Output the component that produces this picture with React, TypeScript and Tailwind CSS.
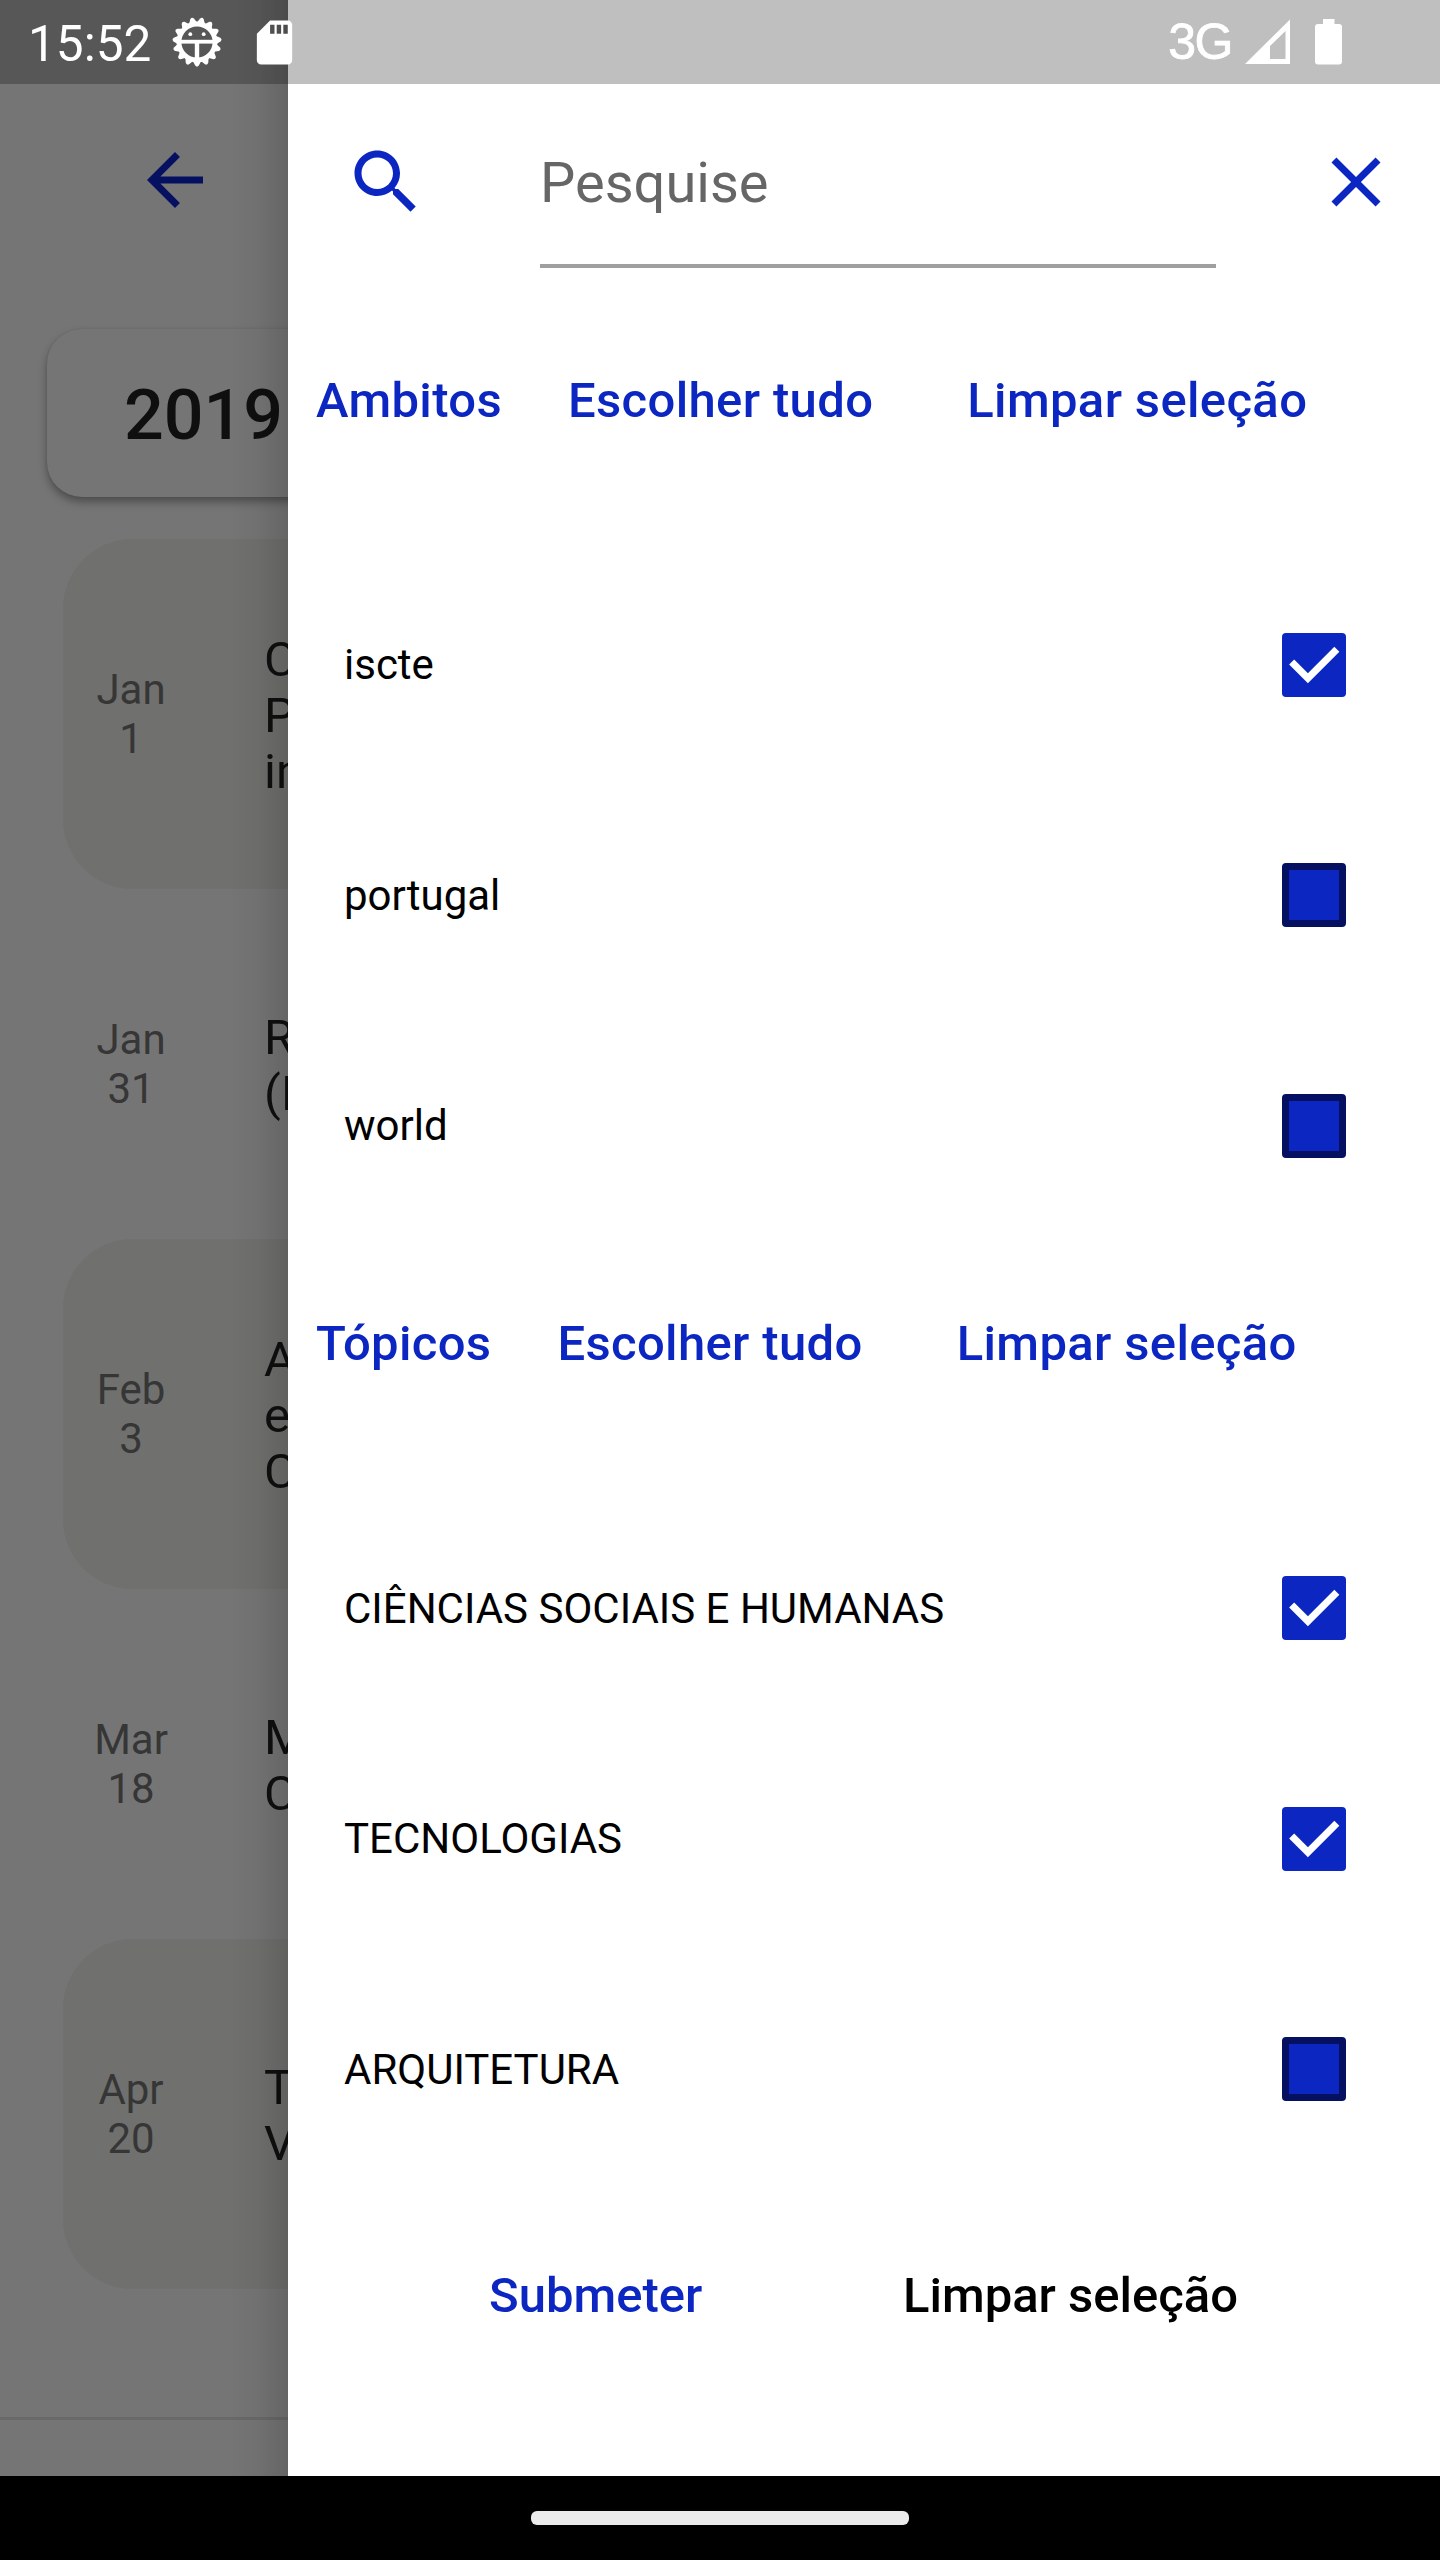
import React from "react";

const BLUE = "#0c26c1";

function GearIcon() {
  const teeth = Array.from({ length: 15 }, (_, i) => i * 24 + 12);
  return (
    <svg className="mt-[17px] ml-[22px] size-[50px] shrink-0" viewBox="0 0 50 50">
      <circle cx="25" cy="25" r="18" fill="none" stroke="#fff" strokeWidth="4.8" />
      {teeth.map((a) => (
        <path key={a} d="M20.800 6L23.200 1.400Q25 -.7 26.800 1.400L29.200 6Z" fill="#fff" transform={`rotate(${a} 25 25)`} />
      ))}
      <rect x="8" y="22.800" width="34" height="3.800" fill="#fff" />
      <rect x="22.800" y="25" width="4.400" height="17" fill="#fff" />
      <circle cx="18.3" cy="17.2" r="1.900" fill="#fff" />
      <circle cx="31.7" cy="17.2" r="1.900" fill="#fff" />
    </svg>
  );
}

function StatusBar() {
  return (
    <div className="absolute inset-x-0 top-0 z-20 flex h-[84px] bg-black/25 text-white">
      <span className="mt-[15px] ml-[28px] w-[122px] text-[49.5px] leading-[59px]">15:52</span>
      <GearIcon />
      <svg className="mt-[16px] ml-[26px] size-[53px] shrink-0" viewBox="0 0 24 24" fill="#fff">
        <path d="M18 2h-8L4.02 8 4 20c0 1.100.9 2 2 2h12c1.100 0 2-.9 2-2V4c0-1.100-.9-2-2-2zm-6 6h-2V4h2v4zm3 0h-2V4h2v4zm3 0h-2V4h2v4z" />
      </svg>
      <span className="mt-[13px] ml-auto font-['Liberation_Sans',sans-serif] text-[50px] leading-[59px] tracking-[-1.5px] [-webkit-text-stroke:0.8px_white]">3G</span>
      <svg className="mt-[19px] ml-[13px] h-[46px] w-[46px] shrink-0" viewBox="0 0 46 46" fill="#fff">
        <path fillRule="evenodd" d="M0 45L45 .5V45ZM25 27V40H40.500V12Z" />
      </svg>
      <svg className="mt-[19px] mr-[98px] ml-[24px] h-[46px] w-[27px] shrink-0" viewBox="0 0 27 46" fill="#fff">
        <path d="M8 0H19.500V5H24Q27 5 27 8V42.500Q27 45.500 24 45.500H3Q0 45.500 0 42.500V8Q0 5 3 5H8Z" />
      </svg>
    </div>
  );
}

const events = [
  { month: "Jan", day: "1", title: ["C", "P", "in"] },
  { month: "Jan", day: "31", title: ["R", "(I"] },
  { month: "Feb", day: "3", title: ["A", "e", "C"] },
  { month: "Mar", day: "18", title: ["M", "C"] },
  { month: "Apr", day: "20", title: ["T", "V"] },
];

function Timeline() {
  return (
    <div className="relative flex h-[2476px] w-[288px] flex-col overflow-hidden bg-[#757575]">
      <svg className="mt-[138px] ml-[133px] size-[84px] shrink-0" viewBox="0 0 24 24" fill="#051060">
        <path d="M20 11H7.830l5.590-5.590L12 4l-8 8 8 8 1.410-1.410L7.830 13H20v-2z" />
      </svg>
      <div className="mt-[107px] ml-[47px] h-[168px] w-[400px] shrink-0 rounded-[35px] pt-[45px] pl-[77px] text-[70px] leading-[82px] font-medium text-[#0f0f0f] shadow-[0_5px_9px_rgba(0,0,0,0.34),0_0_2px_rgba(0,0,0,0.1)]">
        2019
      </div>
      <div className="mt-[42px] ml-[63px] flex flex-col">
        {events.map((e, i) => (
          <div key={i} className={`flex h-[350px] w-[420px] items-center rounded-[70px] ${i % 2 === 0 ? "bg-[#70706e]" : ""}`}>
            <div className="w-[136px] text-center text-[42px] leading-[49px] text-[#363636]">
              <div>{e.month}</div>
              <div>{e.day}</div>
            </div>
            <div className="mt-[3px] ml-[65px] text-[49px] leading-[56px] text-[#0f0f0f]">
              {e.title.map((t, j) => (
                <div key={j}>{t}</div>
              ))}
            </div>
          </div>
        ))}
      </div>
      <div className="mt-[128px] h-[3px] shrink-0 bg-[#696969]" />
      <div className="absolute inset-y-0 right-0 w-[60px] bg-linear-to-l from-black/14 via-black/4 to-transparent" />
    </div>
  );
}

function SectionHeader({ title, className }: { title: string; className: string }) {
  return (
    <div className={`flex shrink-0 text-[49px] leading-[57px] font-medium tracking-[0.35px] text-[#0c26c1] ${className}`}>
      <span>{title}</span>
      <span className="ml-[66px]">Escolher tudo</span>
      <span className="ml-[94px]">Limpar seleção</span>
    </div>
  );
}

function CheckRow({ label, checked }: { label: string; checked: boolean }) {
  return (
    <div className="flex h-[230.5px] items-center justify-between pr-[94px] pl-[56px]">
      <span className="text-[42px] leading-[49px] text-black">{label}</span>
      {checked ? (
        <div className="flex size-[64px] items-center justify-center rounded-[4px] bg-[#0c26c1]">
          <svg className="size-[64px]" viewBox="0 0 63 63">
            <path d="M9.500 28.500L25.500 44.500L54 16" fill="none" stroke="#fff" strokeWidth="7" />
          </svg>
        </div>
      ) : (
        <div className="size-[64px] rounded-[4px] border-[7px] border-[#051060] bg-[#0c26c1]" />
      )}
    </div>
  );
}

function Drawer() {
  return (
    <div className="flex h-[2476px] w-[1152px] flex-col bg-white">
      <div className="mt-[84px] flex h-[184px] shrink-0">
        <svg className="mt-[56px] ml-[56px] size-[84px]" viewBox="0 0 24 24" fill={BLUE}>
          <path d="M15.500 14h-.79l-.28-.27C15.410 12.590 16 11.110 16 9.500 16 5.910 13.090 3 9.500 3S3 5.910 3 9.500 5.910 16 9.500 16c1.610 0 3.090-.59 4.230-1.570l.27.28v.79l5 4.990L20.490 19l-4.990-5zm-6 0C7.010 14 5 11.990 5 9.500S7.010 5 9.500 5 14 7.010 14 9.500 11.990 14 9.500 14z" />
        </svg>
        <div className="ml-[112px] w-[676px] border-b-4 border-[#9f9f9f] pt-[66px] text-[56px] leading-[66px] text-[#666]">Pesquise</div>
        <svg className="mt-[56px] ml-[98px] size-[84px]" viewBox="0 0 24 24" fill={BLUE}>
          <path d="M19 6.410L17.590 5 12 10.590 6.410 5 5 6.410 10.590 12 5 17.590 6.410 19 12 13.410 17.590 19 19 17.590 13.410 12z" />
        </svg>
      </div>
      <SectionHeader title="Ambitos" className="mt-[104px] ml-[28px]" />
      <div className="mt-[120.5px]">
        <CheckRow label="iscte" checked />
        <CheckRow label="portugal" checked={false} />
        <CheckRow label="world" checked={false} />
      </div>
      <SectionHeader title="Tópicos" className="mt-[73.5px] ml-[28px]" />
      <div className="mt-[121.5px]">
        <CheckRow label="CIÊNCIAS SOCIAIS E HUMANAS" checked />
        <CheckRow label="TECNOLOGIAS" checked />
        <CheckRow label="ARQUITETURA" checked={false} />
      </div>
      <div className="mt-[82.5px] ml-[201px] flex text-[49px] leading-[57px] font-medium">
        <span className="w-[414px] text-[#0c26c1]">Submeter</span>
        <span className="text-black">Limpar seleção</span>
      </div>
    </div>
  );
}

export default function App() {
  return (
    <div className="relative h-[2560px] w-[1440px] overflow-hidden bg-black font-[Roboto,sans-serif]">
      <StatusBar />
      <div className="flex">
        <Timeline />
        <Drawer />
      </div>
      <div className="flex h-[84px] justify-center pt-[35px]">
        <div className="h-[14px] w-[378px] rounded-[6px] bg-[#ebebeb]" />
      </div>
    </div>
  );
}
